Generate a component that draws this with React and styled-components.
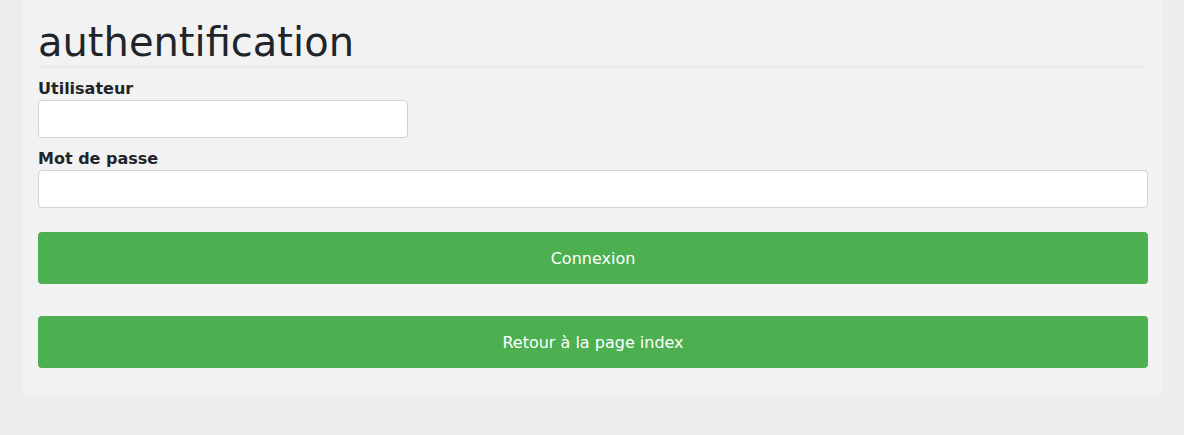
import React from 'react'
import styled, { createGlobalStyle } from 'styled-components'

const GlobalStyle = createGlobalStyle`
  html, body {
    margin: 0;
    padding: 0;
    background-color: #ededed;
    font-family: "DejaVu Sans", Verdana, sans-serif;
    color: #212529;
  }
  * {
    box-sizing: border-box;
  }
`

const Page = styled.div`
  min-height: 100vh;
  background-color: #ededed;
`

const Card = styled.div`
  width: 1140px;
  margin-left: 23px;
  background-color: #f2f2f2;
  border-radius: 0 0 5px 5px;
  padding: 18px 15px 28px 15px;
  display: flex;
  flex-direction: column;
`

const Title = styled.h1`
  margin: 0;
  font-size: 40px;
  font-weight: 400;
  line-height: 48px;
  color: #212529;
  border-bottom: 2px solid #ebebeb;
`

const Form = styled.form`
  display: flex;
  flex-direction: column;
  margin-top: 9px;
`

const Label = styled.label`
  font-size: 16px;
  font-weight: 700;
  line-height: 23px;
  color: #212529;
  margin-top: ${(p) => (p.$first ? '0' : '9px')};
`

const Input = styled.input`
  display: block;
  width: ${(p) => p.$width || '100%'};
  height: 38px;
  padding: 6px 12px;
  font-family: inherit;
  font-size: 16px;
  background-color: #fff;
  border: 1px solid #ced4da;
  border-radius: 4px;
  outline: none;
`

const Button = styled.button`
  width: 100%;
  height: 52px;
  margin-top: ${(p) => p.$gap};
  background-color: #4caf50;
  color: #ffffff;
  border: none;
  border-radius: 4px;
  font-family: inherit;
  font-size: 16px;
  cursor: pointer;
`

const App = () => {
    return (
        <>
            <GlobalStyle />
            <Page>
                <Card>
                    <Title>authentification</Title>
                    <Form onSubmit={(e) => e.preventDefault()}>
                        <Label $first htmlFor="user">Utilisateur</Label>
                        <Input id="user" type="text" $width="370px" />
                        <Label htmlFor="pass">Mot de passe</Label>
                        <Input id="pass" type="password" />
                        <Button type="submit" $gap="24px">Connexion</Button>
                        <Button type="button" $gap="32px">Retour à la page index</Button>
                    </Form>
                </Card>
            </Page>
        </>
    )
}

export default App
